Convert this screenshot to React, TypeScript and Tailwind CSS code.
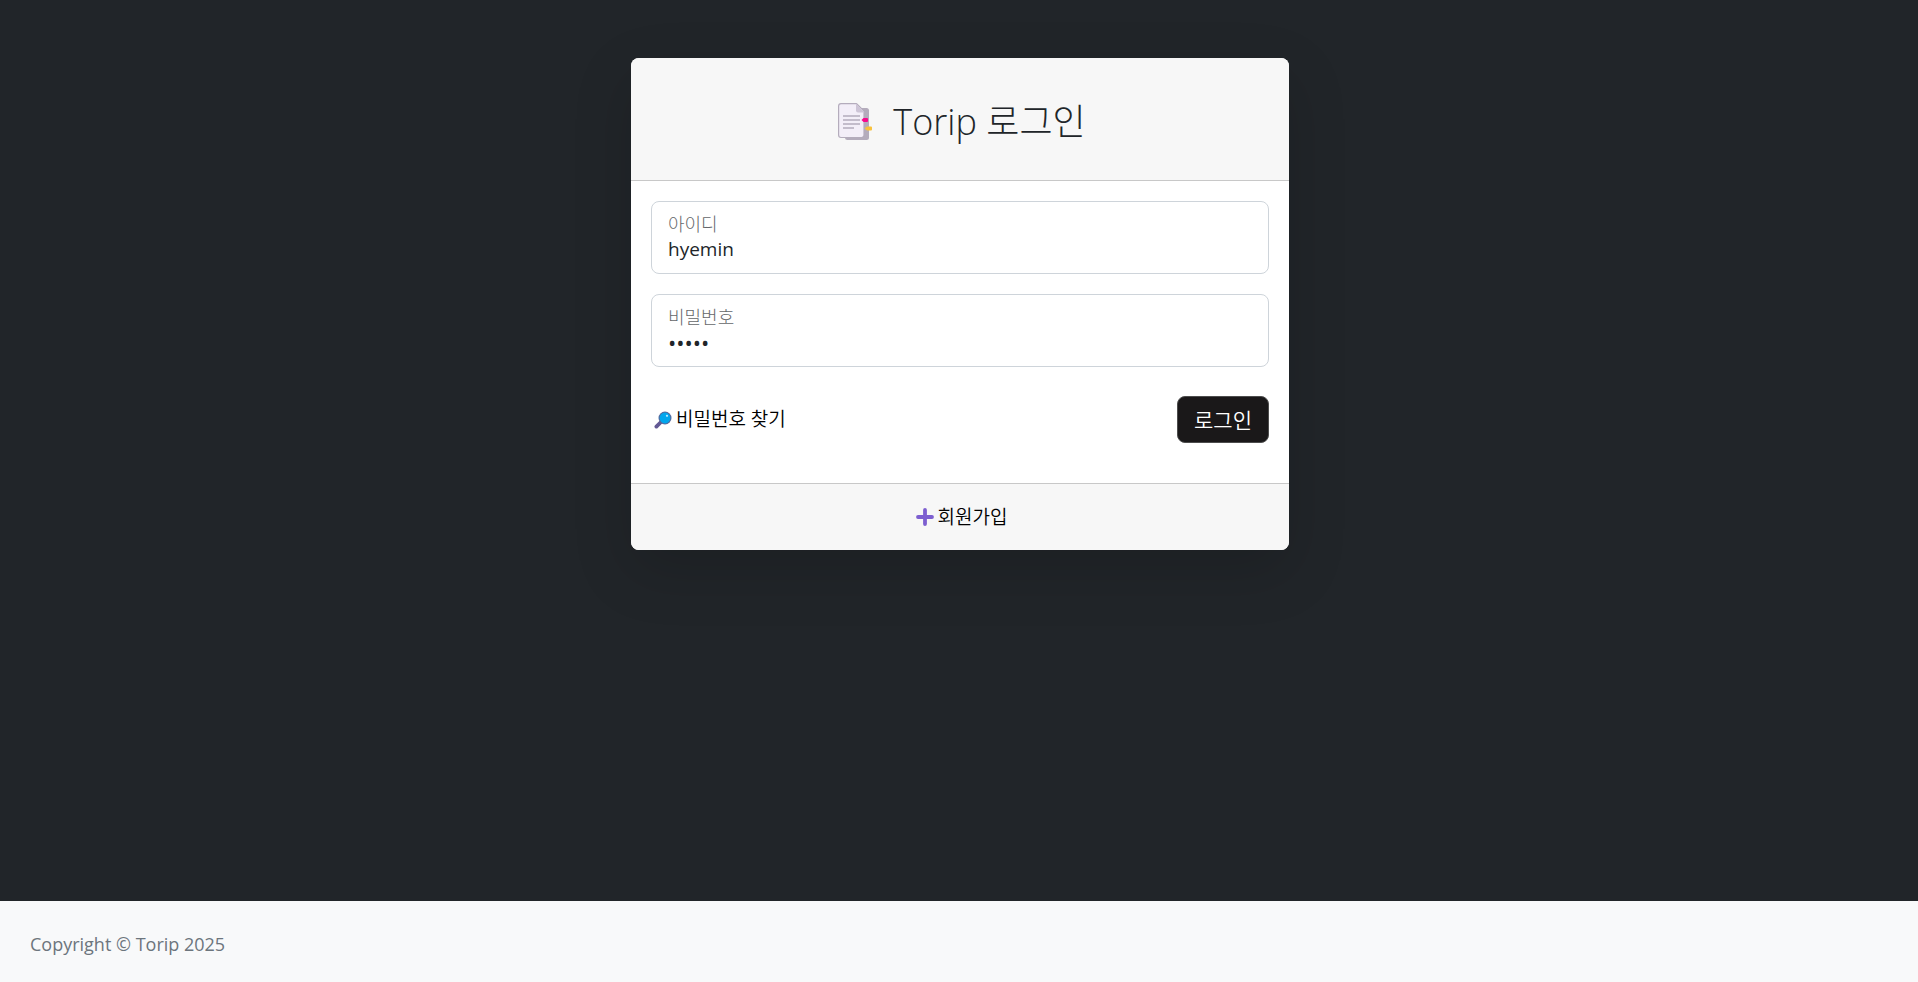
import React, { useState } from "react";

function DocumentIcon() {
  return (
    <svg className="h-[38px] w-[34px] shrink-0" viewBox="0 0 34 38" aria-hidden="true">
      <rect x="7" y="5" width="24" height="32" rx="2.5" fill="#b4acbc" />
      <path d="M3 .6h15.500L26 8v24a2.500 2.500 0 0 1-2.500 2.500H3A2.500 2.500 0 0 1 .6 32V3A2.500 2.500 0 0 1 3 .6Z" fill="#f3eef8" stroke="#b4acbc" strokeWidth="1.200" />
      <path d="M18 .6 26.500 9.500H20a2 2 0 0 1-2-2Z" fill="#cdc4d6" />
      <path d="M5 13h17M5 17h17M5 21h17M5 25h11" stroke="#b4acbc" strokeWidth="1.400" />
      <path d="m23.500 17 2-2H29a1 1 0 0 1 1 1v2a1 1 0 0 1-1 1h-3.500Z" fill="#f70a8d" />
      <path d="m26.500 25.500 2.500-2h4a1 1 0 0 1 1 1v2a1 1 0 0 1-1 1h-4Z" fill="#f9c23c" />
    </svg>
  );
}

function SearchIcon() {
  return (
    <svg className="size-[18px] shrink-0" viewBox="0 0 18 18" aria-hidden="true">
      <path d="M7 11 2.400 15.600" stroke="#635994" strokeWidth="3.800" strokeLinecap="round" />
      <circle cx="11" cy="7" r="6.500" fill="#54689c" />
      <circle cx="11" cy="7" r="5.400" fill="#00a6ed" />
      <circle cx="13" cy="4.800" r="1.100" fill="#b9eaff" />
    </svg>
  );
}

function PlusIcon() {
  return (
    <svg className="size-[18px] shrink-0" viewBox="0 0 18 18" aria-hidden="true">
      <path d="M9 2v14M2 9h14" stroke="#7d5fd0" strokeWidth="3.800" strokeLinecap="round" />
    </svg>
  );
}

type FieldProps = {
  id: string;
  label: string;
  type: string;
  value: string;
  onChange: (value: string) => void;
};

function Field({ id, label, type, value, onChange }: FieldProps) {
  return (
    <div className="flex h-[73px] flex-col rounded-lg border border-[#ced4da] bg-white px-4 pt-[9px] focus-within:border-[#86b7fe]">
      <label htmlFor={id} className="text-lg leading-[26px] font-light text-[#64676a]">
        {label}
      </label>
      <input
        id={id}
        type={type}
        value={value}
        onChange={(e) => onChange(e.target.value)}
        className={`h-6 w-full bg-transparent leading-6 text-[#212529] outline-none ${type === "password" ? "text-[22px]" : "text-[19px]"}`}
      />
    </div>
  );
}

export default function App() {
  const [userId, setUserId] = useState("hyemin");
  const [password, setPassword] = useState("torip");

  return (
    <div className="flex min-h-screen flex-col bg-[#212529] font-['Open_Sans','Noto_Sans_CJK_KR',sans-serif] text-[#212529]">
      <main className="flex grow justify-center pt-[58px] pr-4 pb-10 pl-[18px]">
        <section className="w-full max-w-[658px] self-start overflow-hidden rounded-lg bg-white shadow-[0_20px_60px_rgba(0,0,0,0.15)]">
          <header className="flex h-[123px] items-center justify-center gap-[21px] border-b border-[#c8c8c8] bg-[#f7f7f7] pt-[5px] pl-1">
            <DocumentIcon />
            <h1 className="text-4xl leading-[44px] font-light">Torip 로그인</h1>
          </header>
          <form className="px-5 pt-5 pb-10" onSubmit={(e) => e.preventDefault()}>
            <div className="flex flex-col gap-5">
              <Field id="userId" label="아이디" type="text" value={userId} onChange={setUserId} />
              <Field id="password" label="비밀번호" type="password" value={password} onChange={setPassword} />
            </div>
            <div className="mt-[29px] flex items-center justify-between">
              <a href="#password" className="flex items-center gap-1 pl-[3px] text-[19px] leading-[26px] font-[350] text-black">
                <SearchIcon />
                <span className="pb-0.5">비밀번호 찾기</span>
              </a>
              <button type="submit" className="h-[47px] rounded-lg border border-[#4d4d4d] bg-[#1a1819] px-4 text-[21px] leading-[30px] font-[350] text-white">
                로그인
              </button>
            </div>
          </form>
          <footer className="flex h-[67px] items-center justify-center border-t border-[#c8c8c8] bg-[#f7f7f7]">
            <a href="#register" className="flex items-center gap-1 pl-[3px] text-[19px] leading-[26px] font-[350] text-black">
              <PlusIcon />
              <span className="pb-px">회원가입</span>
            </a>
          </footer>
        </section>
      </main>
      <footer className="flex h-[81px] items-center bg-[#f8f9fa] px-[30px] pt-[5px]">
        <p className="text-lg leading-[26px] text-[#6c757d]">Copyright © Torip 2025</p>
      </footer>
    </div>
  );
}
